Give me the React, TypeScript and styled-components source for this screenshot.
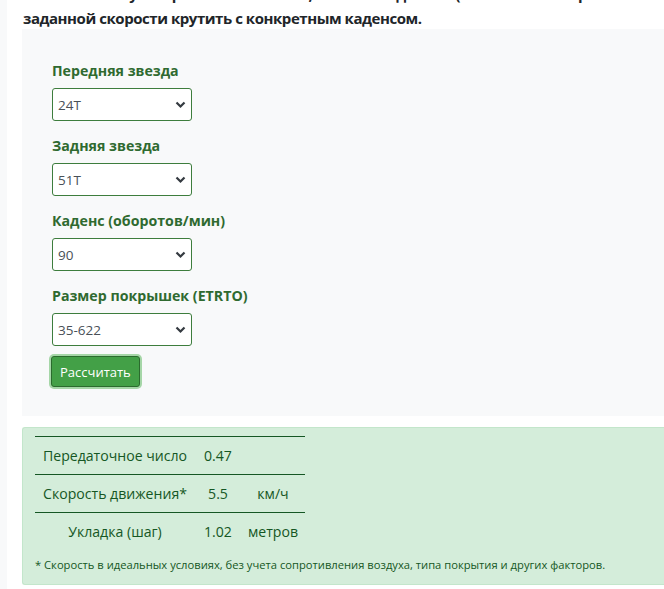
import React from "react";
import styled, { createGlobalStyle } from "styled-components";

const Global = createGlobalStyle`
  html, body { margin: 0; padding: 0; background: #f8f9fa; }
  body { font-family: "Open Sans", "Noto Sans", sans-serif; color: #212529; }
`;

const Page = styled.div`
  margin-left: 7px;
  background: #fff;
  padding: 0 0 0 15px;
  height: 589px;
  overflow: hidden;
`;

const Intro = styled.p`
  margin: -18px 0 0 1px;
  font-size: 15px;
  letter-spacing: -0.45px;
  font-weight: 700;
  line-height: 24px;
  white-space: nowrap;
  color: #212529;
`;

const FormPanel = styled.form`
  margin-top: -1px;
  background: #f8f9fa;
  padding: 30px 30px 29px 30px;
  display: flex;
  flex-direction: column;
  align-items: flex-start;
`;

const Group = styled.div`
  display: flex;
  flex-direction: column;
  margin-bottom: 13px;
  &:last-of-type { margin-bottom: 10px; }
`;

const Label = styled.label`
  font-size: 14.2px;
  font-weight: 700;
  color: #2f6a30;
  line-height: 24px;
  margin-bottom: 5px;
`;

const SelectWrap = styled.div`
  position: relative;
  width: 140px;
`;

const Select = styled.select`
  appearance: none;
  width: 140px;
  height: 33px;
  box-sizing: border-box;
  border: 1px solid #3d7d3d;
  border-radius: 3px;
  background: #fff;
  font-family: "Open Sans", sans-serif;
  font-size: 13.5px;
  color: #495057;
  padding: 0 0 0 5px;
  margin: 0;
  outline: none;
  display: block;
`;

const Chevron = styled.svg`
  position: absolute;
  right: 6px;
  top: 13px;
  pointer-events: none;
`;

const Button = styled.button`
  margin-left: -1px;
  height: 31px;
  padding: 0 8px;
  background: #43a047;
  color: #fff;
  font-family: "Open Sans", sans-serif;
  font-size: 13px;
  border: 1px solid #2b6b2e;
  border-radius: 3px;
  box-shadow: 0 0 0 2px #a5d6a7;
`;

const Alert = styled.div`
  margin-top: 11px;
  background: #d4edda;
  border: 1px solid #c3e6cb;
  border-right: none;
  border-radius: 3px 0 0 3px;
  padding: 8px 12px 10px 12px;
  color: #155724;
`;

const Table = styled.table`
  border-collapse: collapse;
  width: 270px;
  font-size: 14.1px;
  color: #155724;
`;

const Cell = styled.td<{ $w?: number }>`
  border-top: 1px solid #155724;
  height: 37px;
  padding: 0;
  text-align: center;
  vertical-align: middle;
  width: ${(p) => (p.$w ? `${p.$w}px` : "auto")};
`;

const Note = styled.p`
  margin: 6px 0 0 0;
  font-size: 11.2px;
  line-height: 18px;
  color: #155724;
`;

const fields = [
  { label: "Передняя звезда", value: "24T" },
  { label: "Задняя звезда", value: "51T" },
  { label: "Каденс (оборотов/мин)", value: "90" },
  { label: "Размер покрышек (ETRTO)", value: "35-622" },
];

const rows = [
  ["Передаточное число", "0.47", ""],
  ["Скорость движения*", "5.5", "км/ч"],
  ["Укладка (шаг)", "1.02", "метров"],
];

export default function App() {
  return (
    <>
      <Global />
      <Page>
        <Intro>
          Онлайн калькулятор поможет понять, с каким каденсом (количество оборотов в минуту)
          <br />
          заданной скорости крутить с конкретным каденсом.
        </Intro>
        <FormPanel onSubmit={(e) => e.preventDefault()}>
          {fields.map((f) => (
            <Group key={f.label}>
              <Label>{f.label}</Label>
              <SelectWrap>
                <Select defaultValue={f.value}>
                  <option value={f.value}>{f.value}</option>
                </Select>
                <Chevron width="11" height="8" viewBox="0 0 11 8">
                  <path d="M1.5 1.5 L5.5 5.5 L9.5 1.5" fill="none" stroke="#343a40" strokeWidth="2.2" />
                </Chevron>
              </SelectWrap>
            </Group>
          ))}
          <Button type="submit">Рассчитать</Button>
        </FormPanel>
        <Alert>
          <Table>
            <tbody>
              {rows.map((r) => (
                <tr key={r[0]}>
                  <Cell $w={160}>{r[0]}</Cell>
                  <Cell $w={46}>{r[1]}</Cell>
                  <Cell>{r[2]}</Cell>
                </tr>
              ))}
            </tbody>
          </Table>
          <Note>
            * Скорость в идеальных условиях, без учета сопротивления воздуха, типа покрытия и других факторов.
          </Note>
        </Alert>
      </Page>
    </>
  );
}
